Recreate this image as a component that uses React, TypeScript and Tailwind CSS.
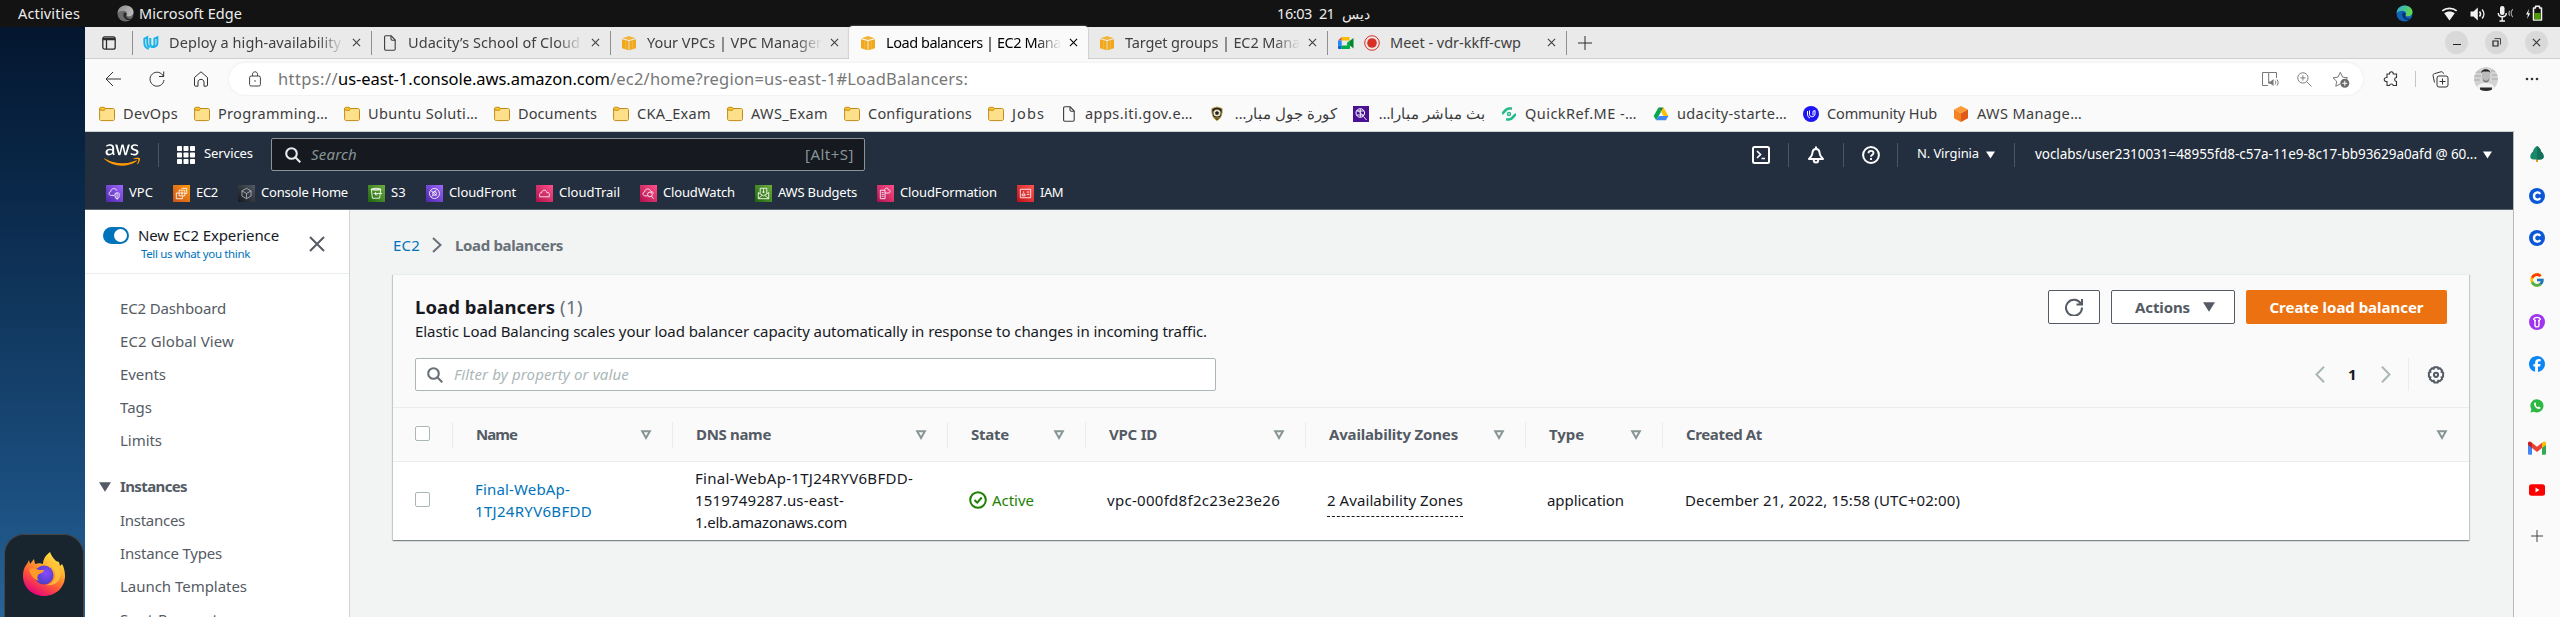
import { useLayoutEffect, useRef, type ReactNode } from "react";
import { FaAws, FaFacebook, FaWhatsapp } from "react-icons/fa6";
import { FcGoogle } from "react-icons/fc";

/* A single line of text whose tracking is set so that it fills the width of its box. */
function T({ children, className = "" }: { children: ReactNode; className?: string }) {
  const box = useRef<HTMLSpanElement>(null);
  const line = useRef<HTMLSpanElement>(null);
  useLayoutEffect(() => {
    const b = box.current;
    const l = line.current;
    if (!b || !l) return;
    l.style.letterSpacing = "0px";
    const n = (l.textContent || "").length;
    const gap = b.getBoundingClientRect().width - l.getBoundingClientRect().width;
    l.style.letterSpacing = `${gap / n}px`;
  }, []);
  return (
    <span ref={box} className={`block shrink-0 whitespace-pre ${className}`}>
      <span ref={line}>{children}</span>
    </span>
  );
}

const Cross = ({ className = "" }: { className?: string }) => (
  <svg viewBox="0 0 10 10" className={`shrink-0 ${className}`} fill="none" stroke="currentColor" strokeWidth="1.200">
    <path d="M1 1l8 8M9 1l-8 8" />
  </svg>
);

const AwsCube = () => (
  <svg viewBox="0 0 16 16" className="size-4 shrink-0">
    <path d="M1 4.200L7.600 6v9.200L1 13.200z" fill="#f0a91f" />
    <path d="M15 4.200L8.400 6v9.200L15 13.200z" fill="#f0a91f" />
    <path d="M1.400 3.200L8 1l6.600 2.200L8 5z" fill="#f5b335" />
    <path d="M4.600 5v9.400M11.400 5v9.400" stroke="#f7bd4c" strokeWidth=".6" />
  </svg>
);

const PageIcon = ({ className = "size-4" }: { className?: string }) => (
  <svg viewBox="0 0 16 16" className={`shrink-0 ${className}`} fill="none" stroke="#3c3c3c" strokeWidth="1.100">
    <path d="M3.800.8h5.400L13.200 5v9c0 .8-.4 1.200-1.200 1.200H3.800c-.8 0-1.200-.4-1.200-1.200V2c0-.8.4-1.200 1.200-1.200z" />
    <path d="M9 .9V4c0 .8.4 1.200 1.200 1.200h3" />
  </svg>
);

const Folder = () => (
  <svg viewBox="0 0 16 16" className="size-4 shrink-0">
    <path d="M.6 2.500h13.200c1.200 0 1.700.6 1.700 1.700v8.600c0 1.200-.6 1.800-1.800 1.800H2.400c-1.200 0-1.800-.6-1.800-1.800z" fill="#ffe08a" stroke="#c08a18" />
    <path d="M.6 3.800V2.800c0-1 .5-1.500 1.500-1.500h2.700c1.200 0 2 1.400 1.200 2.300-.5.600-1.100.8-1.900.8z" fill="#ffc52f" stroke="#c08a18" />
  </svg>
);

function Edge({ gray = false, id }: { gray?: boolean; id: string }) {
  return (
    <svg viewBox="0 0 18 18" className="size-[17px] shrink-0">
      <defs>
        <linearGradient id={id} x1="0" y1="0" x2="1" y2=".4">
          <stop offset="0" stopColor={gray ? "#8b8b8b" : "#2ba9e0"} />
          <stop offset="1" stopColor={gray ? "#b9b9b9" : "#62d64b"} />
        </linearGradient>
      </defs>
      <circle cx="9" cy="9" r="8.500" fill={gray ? "#6c6c6c" : "#1062b8"} />
      <path d="M.6 8.500C1.200 3.500 4.800.5 9.200.5c4.900 0 8.300 3.300 8.300 7 0 2.700-2.100 4.500-4.700 4.500-1.700 0-2.700-.6-2.400-1.300.9-1.400 0-4.600-3.600-4.600-2.700 0-5 1-6.200 2.400z" fill={`url(#${id})`} />
      <path d="M7.300 8.200c-1.700 3.200.5 7.200 4.500 7.700 1.800.1 3.200-.6 4.200-1.700-2.300 1-4.800.3-6-1.500-.7-1-.6-2 .2-3.200-.4-1.500-2.100-2-2.900-1.300z" fill={gray ? "#2a2a2a" : "#0b2f63"} />
    </svg>
  );
}

function TopBar() {
  return (
    <header className="flex h-[27px] shrink-0 items-center bg-[#131313] pl-[18px] pr-[17px] text-[14.500px] leading-[27px] text-[#ededed]">
      <T className="w-[62px]">Activities</T>
      <div className="ml-[37px] flex w-[1160px] items-center gap-[5px]">
        <Edge gray id="edge-gray" />
        <T className="w-[103px]">Microsoft Edge</T>
      </div>
      <div className="flex w-[93px] shrink-0 items-center justify-between">
        <T className="w-[35px]">16:03</T>
        <T className="w-[15px]">21</T>
        <span className="w-[29px] text-right text-[14px]">ديس</span>
      </div>
      <div className="flex flex-1 items-center justify-end">
        <Edge id="edge-color" />
        <svg viewBox="0 0 17 14" className="ml-[28px] h-[14px] w-[17px]" fill="#f2f2f2">
          <path d="M8.500 13.500L3.200 6.200C6 4 11 4 13.800 6.200z" />
          <path d="M1.300 3.900c4-3.500 10.400-3.500 14.400 0" fill="none" stroke="#f2f2f2" strokeWidth="1.800" />
        </svg>
        <svg viewBox="0 0 16 16" className="ml-3 size-4" fill="none" stroke="#f2f2f2">
          <path d="M.5 5.500h3L7.800 1.500v13L3.500 10.500h-3z" fill="#f2f2f2" stroke="none" />
          <path d="M9.500 5.500c1.200 1.400 1.200 3.600 0 5" strokeWidth="1.500" />
          <path d="M12 3.500c2.600 2.600 2.600 6.400 0 9" strokeWidth="1.300" />
        </svg>
        <svg viewBox="0 0 17 17" className="ml-[11px] size-[17px]" fill="none" stroke="#f2f2f2">
          <rect x="3" y="1" width="4.500" height="9" rx="2.200" fill="#f2f2f2" stroke="none" />
          <path d="M1.300 8c0 5 8 5 8 0M5.200 12v4M2.500 16h5.500" strokeWidth="1.400" />
          <path d="M12.800 5.800c-1.200 1.500-1.200 3.500 0 5M15.800 4.200c-2 2.400-2 5.600 0 8" strokeWidth="1.100" stroke="#a5a5a5" />
        </svg>
        <svg viewBox="0 0 18 17" className="ml-[11px] h-[17px] w-[18px]">
          <path d="M4 4L1 9.500h2L2 14l3.300-5.800H3.300z" fill="#f2f2f2" />
          <path d="M8.500 3h2V1.300h4V3h2v12h-8z" fill="none" stroke="#f2f2f2" strokeWidth="1.500" strokeLinejoin="round" />
          <path d="M9.500 8h6v6.500h-6z" fill="#4e9a06" />
        </svg>
      </div>
    </header>
  );
}

function Dock() {
  return (
    <aside className="flex w-[85px] shrink-0 flex-col justify-end bg-linear-to-b from-[#04162f] from-0% via-[#1b4f80] via-80% to-[#276498]">
      <div className="ml-1 flex h-[83px] w-20 justify-center rounded-t-[20px] border border-b-0 border-[#454545] bg-[#18242e] pt-4">
        <svg viewBox="0 0 44 46" className="h-[46px] w-[44px]">
          <defs>
            <linearGradient id="fox" x1=".85" y1="0" x2=".3" y2="1">
              <stop offset="0" stopColor="#fff44f" />
              <stop offset=".35" stopColor="#ffb02e" />
              <stop offset=".65" stopColor="#ff5a36" />
              <stop offset="1" stopColor="#e5007e" />
            </linearGradient>
            <radialGradient id="globe" cx=".6" cy=".4" r=".6">
              <stop offset="0" stopColor="#8a4bff" />
              <stop offset="1" stopColor="#4b3fc4" />
            </radialGradient>
          </defs>
          <path d="M28 1c1 3 3 6 6 9l3 1 1 4 2-2c2 3 3 8 3 12 0 11-9 20-21 20S1 36 1 25c0-6 2-10 4-12l2-4 1 4 4-5 1 5c3-1 6-1 8 0 0-5 3-9 7-12z" fill="url(#fox)" />
          <circle cx="22" cy="24" r="9.500" fill="url(#globe)" />
          <path d="M7 18c4-2 8 0 10 1h5c0 3-4 3-6 5-1 2-1 4 1 6-6-2-9-7-10-12z" fill="#ff9a2a" />
          <path d="M23 13c5 0 10 4 10 11 0 5-4 9-9 10 12 2 16-8 14-15-3-5-8-8-15-6z" fill="#ffc73a" opacity=".8" />
        </svg>
      </div>
    </aside>
  );
}

function Tab({ icon, children, text, active = false, sep = true, fade = true }: { icon: ReactNode; children: string; text: string; active?: boolean; sep?: boolean; fade?: boolean }) {
  return (
    <div className={`relative flex h-[33px] w-[239px] shrink-0 items-center ${active ? "z-10 rounded-t-[4px] bg-[#fafafa] text-black shadow-[0_0_2px_#9a9a9a] [clip-path:inset(-2px_-2px_0_-2px)]" : "text-[#3f3f3f]"}`}>
      {sep ? <i className="h-6 w-px bg-[#8f8f8f]" /> : <i className="h-6 w-px" />}
      <span className="ml-[10px] flex items-center gap-[10px]">{icon}</span>
      <div className={`ml-[10px] w-[175px] ${fade ? "[mask-image:linear-gradient(to_right,black_85%,transparent_100%)]" : ""}`}>
        <T className={text}>{children}</T>
      </div>
      <span className="absolute right-[10px]"><Cross className="size-[9px]" /></span>
    </div>
  );
}

function Tabs() {
  return (
    <div className="flex h-8 shrink-0 items-center border-b border-[#cfcfcf] bg-[#eaeaea] pr-3 text-[14.500px]">
      <svg viewBox="0 0 14 14" className="ml-[17px] mr-4 size-[14px]" fill="none" stroke="#2c2c2c" strokeWidth="1.300">
        <rect x=".8" y=".8" width="12.400" height="12.400" rx="2" />
        <path d="M1 3h12" strokeWidth="2.500" />
        <path d="M4.500 3v10" />
      </svg>
      <Tab text="w-[172px]" icon={
        <svg viewBox="0 0 18 16" className="h-4 w-4" fill="none" stroke="#17b2e8" strokeWidth="2.200">
          <path d="M6.500 14.500C3 13.500 1.500 11 1.500 8V3.200L4.800 1.500V8c0 2.500 1 4 3 4.500" />
          <path d="M8.200 2.500v6.300c0 5.500 8 4.500 8-1V1.500L12.800 3v6c0 3-2.500 4-4 3" />
        </svg>
      }>Deploy a high-availability</Tab>
      <Tab text="w-[172px]" icon={<PageIcon />}>Udacity’s School of Cloud</Tab>
      <Tab text="w-[175px]" icon={<AwsCube />}>Your VPCs | VPC Manager</Tab>
      <Tab text="w-[175px]" active sep={false} icon={<AwsCube />}>Load balancers | EC2 Mana</Tab>
      <Tab text="w-[175px]" sep={false} icon={<AwsCube />}>Target groups | EC2 Mana</Tab>
      <Tab text="w-[131px]" fade={false} icon={
        <>
          <svg viewBox="0 0 16 16" className="size-4">
            <path d="M0 5.500L3.700 2v3.500z" fill="#ea4335" />
            <path d="M3.700 2H11.500v3.500H3.700z" fill="#fbbc04" />
            <path d="M0 5.500h3.700v5H0z" fill="#2684fc" />
            <path d="M0 10.500h3.700V14H1.200C.4 14 0 13.600 0 13z" fill="#0066da" />
            <path d="M3.700 10.500H9V8l3 2.500V13c0 .7-.3 1-1 1H3.700z" fill="#00ac47" />
            <path d="M9 8l6.500-5v10.500z" fill="#00832d" />
            <path d="M12 5.500V10.500L9 8z" fill="#00ac47" />
          </svg>
          <svg viewBox="0 0 16 16" className="size-4">
            <circle cx="8" cy="8" r="7.300" fill="none" stroke="#d93025" />
            <circle cx="8" cy="8" r="4.800" fill="#d93025" />
          </svg>
        </>
      }>Meet - vdr-kkff-cwp</Tab>
      <i className="h-6 w-px bg-[#8f8f8f]" />
      <svg viewBox="0 0 14 14" className="ml-[11px] size-[14px]" stroke="#2c2c2c"><path d="M7 0v14M0 7h14" /></svg>
      <div className="ml-auto flex gap-[17px] text-[#333]">
        <span className="grid size-[23px] place-items-center rounded-full bg-[#d9d9d9]"><i className="mt-1 h-px w-2 bg-[#222]" /></span>
        <span className="grid size-[23px] place-items-center rounded-full bg-[#d9d9d9]">
          <svg viewBox="0 0 9 9" className="size-[9px]" fill="none" stroke="#222"><path d="M1 3h5v5H1z" strokeWidth="1.200" /><path d="M2.500.6h6v6" strokeWidth=".8" /></svg>
        </span>
        <span className="grid size-[23px] place-items-center rounded-full bg-[#d9d9d9]"><Cross className="size-[9px]" /></span>
      </div>
    </div>
  );
}

function Toolbar() {
  return (
    <div className="flex h-[37px] shrink-0 items-center bg-[#fafafa] pt-[3px]">
      <svg viewBox="0 0 16 16" className="ml-5 size-4" fill="none" stroke="#333"><path d="M16 8H1M8 1L1 8l7 7" /></svg>
      <svg viewBox="0 0 16 16" className="ml-7 size-4" fill="none" stroke="#333"><path d="M14.500 5.500A7 7 0 1 0 15 9M14.700 .5v5H10" /></svg>
      <svg viewBox="0 0 16 16" className="ml-7 size-4" fill="none" stroke="#333"><path d="M1.500 6.500L8 .8l6.500 5.700V14c0 .8-.4 1.200-1.200 1.200h-2.300V11c0-3.500-6-3.500-6 0v4.200H2.700c-.8 0-1.200-.4-1.200-1.200z" /></svg>
      <div className="ml-5 flex h-8 w-[2134px] items-center rounded-full bg-white pl-5 pr-[13px] text-[16.500px] text-[#777] shadow-[0_0_3px_#00000014]">
        <svg viewBox="0 0 12 16" className="mr-[17px] h-4 w-3" fill="none" stroke="#444"><rect x=".6" y="5" width="10.800" height="10" rx="1.500" /><path d="M3.500 5V3.200c0-3.200 5-3.200 5 0V5" /><circle cx="6" cy="10" r=".8" fill="#444" stroke="none" /></svg>
        <T className="w-[60px]">https://</T>
        <T className="w-[272px] text-black">us-east-1.console.aws.amazon.com</T>
        <T className="w-[358px]">/ec2/home?region=us-east-1#LoadBalancers:</T>
        <svg viewBox="0 0 18 16" className="ml-auto h-4 w-[18px]" fill="none" stroke="#777"><path d="M7 14.500H1.500v-13h6.200v11M7.700 1.500H15.500V7" /><path d="M8 10.500h1.500L12.500 8v7L9.500 12.800H8z" fill="#777" stroke="none" /><path d="M14 9.500c1 1.300 1 2.700 0 4M16 8.500c1.500 2 1.500 4.200 0 6.200" /></svg>
        <svg viewBox="0 0 16 16" className="ml-[18px] size-[15px]" fill="none" stroke="#777"><circle cx="6.300" cy="6.300" r="5.500" /><path d="M10.300 10.300L15.500 15.500M3.500 6.300h5.600M6.300 3.500v5.600" /></svg>
        <svg viewBox="0 0 18 17" className="ml-5 h-[17px] w-[18px]" fill="none" stroke="#777"><path d="M8 13l-4.200 2.300.9-5L1 6.800l5-.7L8.300 1.300l2.300 4.800 5 .7-1.800 1.700" /><circle cx="12.800" cy="12.300" r="4.500" fill="#6a6a6a" stroke="none" /><path d="M12.800 9.800v5M10.300 12.300h5" stroke="#fff" /></svg>
      </div>
      <svg viewBox="0 0 16 17" className="ml-5 h-[17px] w-4" fill="none" stroke="#333" strokeWidth="1.100"><path d="M4 3h2.500c0-3 3.800-3 3.800 0H13.500v3.500c-2.500.3-2.500 3.700 0 4V14.500h-3.200c-.3-2-3.500-2-3.800 0H4v-4C.3 10.500.3 6.500 4 6.500z" /></svg>
      <i className="ml-4 h-4 w-px bg-[#c6c6c6]" />
      <svg viewBox="0 0 17 17" className="ml-4 size-[17px]" fill="none" stroke="#333"><rect x="5" y="5" width="11" height="11" rx="2" /><path d="M10.500 7.500v6M7.500 10.500h6M2.500 11.500L1 4.500c0-1 .3-1.500 1.300-1.800l7-2c1 0 1.700.4 2.200 2" /></svg>
      <svg viewBox="0 0 24 24" className="ml-[25px] size-6">
        <defs><clipPath id="avatar"><circle cx="12" cy="12" r="12" /></clipPath></defs>
        <g clipPath="url(#avatar)">
          <path d="M0 0h24v24H0z" fill="#d2d2d2" />
          <path d="M0 5h8M0 9h7M0 13h6M17 4h7M18 8h6M18 12h6" stroke="#aaa" />
          <path d="M2 24c0-7 5-8 10-8s9 2 9 8z" fill="#f1f1f1" />
          <path d="M8 6c0-5 8-5 8 0v5c0 3-2 5-4 5s-4-2-4-5z" fill="#bbb" />
          <path d="M7.500 6c-.5-5 9-5 8.800 0l-1.300-1.500H9z" fill="#222" />
          <path d="M9 11.500c1 3 5 3 6 0v1.500c-1 3-5 3-6 0z" fill="#777" />
          <path d="M6 20.500h12V24H6z" fill="#2b2b2b" />
        </g>
      </svg>
      <svg viewBox="0 0 14 4" className="ml-[27px] h-1 w-[14px]" fill="#333"><circle cx="2" cy="2" r="1.300" /><circle cx="7" cy="2" r="1.300" /><circle cx="12" cy="2" r="1.300" /></svg>
    </div>
  );
}

const Mark = ({ icon, children, w }: { icon: ReactNode; children: string; w: string }) => (
  <div className="flex shrink-0 items-center gap-2">
    {icon}
    <T className={w}>{children}</T>
  </div>
);

function Bookmarks() {
  const folders: [string, string][] = [
    ["DevOps", "w-[55px]"],
    ["Programming…", "w-[110px]"],
    ["Ubuntu Soluti…", "w-[110px]"],
    ["Documents", "w-[79px]"],
    ["CKA_Exam", "w-[74px]"],
    ["AWS_Exam", "w-[77px]"],
    ["Configurations", "w-[104px]"],
    ["Jobs", "w-[33px]"],
  ];
  return (
    <div className="flex h-[35px] shrink-0 items-center gap-4 bg-[#fafafa] pl-[14px] text-[14.500px] text-[#3d3d3d]">
      {folders.map(([name, w]) => (
        <Mark key={name} w={w} icon={<Folder />}>{name}</Mark>
      ))}
      <Mark w="w-[108px]" icon={<PageIcon />}>apps.iti.gov.e…</Mark>
      <div className="flex shrink-0 items-center gap-2">
        <svg viewBox="0 0 16 16" className="size-4"><path d="M3 2.500L8 1l5 1.500c.5 5-.5 9.500-5 12-4.500-2.500-5.500-7-5-12z" fill="#2a2418" stroke="#b59a4a" /><circle cx="8" cy="7" r="3.600" fill="#e8e2cb" /><path d="M8 5l2 1.500-.8 2.200H6.800L6 6.500z" fill="#222" /><path d="M5 12h6" stroke="#c89d2d" /></svg>
        <span dir="rtl" className="w-[104px] whitespace-nowrap text-right text-[14.500px]">كورة جول مبار...</span>
      </div>
      <div className="flex shrink-0 items-center gap-2">
        <svg viewBox="0 0 16 16" className="size-4" fill="none" stroke="#fff"><path d="M0 0h16v16H0z" fill="#4a1192" stroke="none" /><circle cx="7.300" cy="7" r="4.300" /><path d="M3.500 5h7.500M3.500 9h7.500M7.300 3v8M4.500 4l6 6M10.500 10.500l3 3.500" strokeWidth=".9" /></svg>
        <span dir="rtl" className="w-[108px] whitespace-nowrap text-right text-[14.500px]">بث مباشر مبارا...</span>
      </div>
      <Mark w="w-[112px]" icon={<svg viewBox="0 0 16 16" className="size-4" fill="none" stroke="#25b98b" strokeWidth="2.600"><path d="M1 7.500c2 0 3-5 7-5h3M15 8.500c-2 0-3 5-7 5H5" /><circle cx="8" cy="8" r="1.500" strokeWidth="1.400" /></svg>}>QuickRef.ME -…</Mark>
      <Mark w="w-[110px]" icon={<svg viewBox="0 0 16 16" className="size-4"><path d="M5.500 1.500L8 5.700 3.200 14.300.7 10z" fill="#00a94f" /><path d="M5.500 1.500h5L8 5.700z" fill="#188038" /><path d="M10.500 1.500l4.900 8.500h-4.900L8 5.700z" fill="#ffc107" /><path d="M5.600 10h9.800l-2.500 4.300H3.200z" fill="#4285f4" /></svg>}>udacity-starte…</Mark>
      <Mark w="w-[110px]" icon={<svg viewBox="0 0 16 16" className="size-4" fill="none" stroke="#fff"><circle cx="8" cy="8" r="8" fill="#1c16f5" stroke="none" /><path d="M4.500 5v3c0 2.500 1 3.500 2.500 4M6.500 4.500v4c0 3 5.500 3 5.500-.5V4.500L10 5.300v4" /></svg>}>Community Hub</Mark>
      <Mark w="w-[105px]" icon={<svg viewBox="0 0 16 16" className="size-4"><path d="M8 0l7 3.600L8 7.200 1 3.600z" fill="#ff9b37" /><path d="M1 3.600l7 3.600V16l-7-3.800z" fill="#f58220" /><path d="M15 3.600L8 7.200V16l7-3.800z" fill="#e05a1c" /></svg>}>AWS Manage…</Mark>
    </div>
  );
}

const Caret = ({ className = "" }: { className?: string }) => (
  <svg viewBox="0 0 10 8" className={`shrink-0 ${className}`} fill="currentColor"><path d="M0 0h10L5 8z" /></svg>
);

const Lens = ({ className = "" }: { className?: string }) => (
  <svg viewBox="0 0 16 16" className={`size-4 shrink-0 ${className}`} fill="none" stroke="currentColor" strokeWidth="2.100"><circle cx="6.500" cy="6.500" r="5.300" /><path d="M10.300 10.300l5 5" /></svg>
);

const tiles: { name: string; w: string; bg: string; art: ReactNode }[] = [
  { name: "VPC", w: "w-[24px]", bg: "from-[#4d27aa] to-[#a166ff]", art: <path d="M9 11H5.500C2.500 11 2.500 7.500 5 7c0-4 6-4 6.500-1M9.500 9c2-1 3.500-1 4.500 0 0 3 0 5-2.300 6C9.500 14 9.500 12 9.500 9zM11.700 8.500V15" /> },
  { name: "EC2", w: "w-[22px]", bg: "from-[#c8511b] to-[#ff9900]", art: <path d="M6.500 5.500h6v6h-6zM9 3.500h5.500V9h-2M10 11.500v3H3.500V8.500h3M8.500 7.500h2v2h-2z" /> },
  { name: "Console Home", w: "w-[87px]", bg: "from-[#16191f] to-[#545b64]", art: <path d="M9 3.500l4.800 2.700v5.500L9 14.500l-4.800-2.800V6.200zM4.200 6.200L9 9l4.800-2.800M9 9v5.500" stroke="#aeb4bb" /> },
  { name: "S3", w: "w-[15px]", bg: "from-[#1b660f] to-[#6cae3e]", art: <path d="M3.500 4.500h10M3.500 4.500l1.200 9.500h7.600l1.200-9.500c0-1.300-10-1.300-10 0s10 1.300 10 0M6 9h9M8 7.500v3h2" /> },
  { name: "CloudFront", w: "w-[67px]", bg: "from-[#4d27aa] to-[#a166ff]", art: <><circle cx="9" cy="9" r="5.300" /><path d="M5.500 6.500l2.500 1.500M8 8l3-2.500M8 8l3 3.500M6 12.500L8 10" /><circle cx="9" cy="9" r="2" /></> },
  { name: "CloudTrail", w: "w-[61px]", bg: "from-[#b0084d] to-[#ff4f8b]", art: <path d="M3.500 12.500h11M4 12c-1-3 1-4 2-3.800C6.500 4.500 11 4.500 11.500 8c2-.5 3.500 1.500 2.500 4" /> },
  { name: "CloudWatch", w: "w-[72px]", bg: "from-[#b0084d] to-[#ff4f8b]", art: <><path d="M8 11.500H5C2.500 11 2.500 7.500 5 7.300c0-4 6-4 6.500-.5 1.500 0 2.500.7 2.500 2.200" /><circle cx="10.500" cy="10" r="2.500" /><path d="M12.300 12l2 2.500" /></> },
  { name: "AWS Budgets", w: "w-[79px]", bg: "from-[#1b660f] to-[#6cae3e]", art: <path d="M3.500 8v6.500h11V8L9 11.500zM5.500 9V3.500h7V9M3.500 14.500L7.500 11M14.500 14.500l-4-3.500M9 4.500v4M7.800 7.500h2.400" /> },
  { name: "CloudFormation", w: "w-[97px]", bg: "from-[#b0084d] to-[#ff4f8b]", art: <path d="M3.500 5.500h5v9h-5zM5 8h2M5 10h2M5 12h2M8 5c1-2.500 4-2 4 0 2-.3 3 3.500 0 3.500H8.500" /> },
  { name: "IAM", w: "w-[23px]", bg: "from-[#bd0816] to-[#ff5252]", art: <path d="M3.500 4.500h11v9h-11zM5.500 11.500V9.500h3v2zM7 6.800v1.400M10.500 7.500h2.500M10.500 10h2.500" /> },
];

const Bar = ({ className = "" }: { className?: string }) => <i className={`h-6 w-px shrink-0 bg-[#4b5663] ${className}`} />;

function AwsNav() {
  return (
    <nav className="flex h-[79px] shrink-0 flex-col border-t border-b border-t-[#c9d2d0] border-b-[#5c646e] bg-[#232f3e] text-[13px] text-white">
      <div className="flex h-[45px] shrink-0 items-center">
        <span className="relative ml-[19px] block h-7 w-[36px] text-[36px] leading-none">
          <FaAws className="-mt-1 text-white [clip-path:inset(0_0_42%_0)]" />
          <FaAws className="absolute left-0 top-0 -mt-1 text-[#ff9900] [clip-path:inset(58%_0_0_0)]" />
        </span>
        <Bar className="ml-[18px]" />
        <svg viewBox="0 0 18 18" className="ml-[18px] size-[18px]" fill="#fff">
          {[0, 6.500, 13].map((x) => [0, 6.500, 13].map((y) => <rect key={`${x}-${y}`} x={x} y={y} width="5" height="5" rx=".8" />))}
        </svg>
        <T className="ml-[9px] w-[49px] pb-px">Services</T>
        <div className="ml-[18px] flex h-[33px] w-[594px] items-center rounded-[2px] border border-[#879596] bg-[#16191f] pl-[13px] pr-[10px] text-[15px] text-[#879596]">
          <Lens className="text-[#e8eaea]" />
          <T className="ml-[10px] w-[46px] italic">Search</T>
          <T className="ml-auto w-[49px]">[Alt+S]</T>
        </div>
        <svg viewBox="0 0 18 18" className="ml-auto size-[18px]" fill="none" stroke="#fff" strokeWidth="2"><rect x="1" y="1" width="16" height="16" rx="1.500" /><path d="M5 5l3.500 3.500L5 12M9.500 12.500H13" strokeWidth="1.700" /></svg>
        <Bar className="ml-[18px]" />
        <svg viewBox="0 0 18 18" className="ml-[18px] size-[18px]" fill="none" stroke="#fff" strokeWidth="2"><path d="M9 .500v2.500C6.800 3 5.500 5 5.300 7.500 5 10 3.500 11 2 13h14c-1.500-2-3-3-3.300-5.500C12.500 5 11.200 3 9 3" strokeLinejoin="round" /><path d="M6.800 13.500v.8c0 3 4.400 3 4.400 0v-.8" /></svg>
        <Bar className="ml-[18px]" />
        <svg viewBox="0 0 18 18" className="ml-[18px] size-[18px]" fill="none" stroke="#fff" strokeWidth="2"><circle cx="9" cy="9" r="7.900" /><path d="M6.500 7.300c0-3.300 5-3.100 5-.2 0 1.700-2.500 1.700-2.500 3.700M9 12v2" strokeWidth="1.900" /></svg>
        <Bar className="ml-[17px]" />
        <T className="ml-[19px] w-[62px] pb-px">N. Virginia</T>
        <Caret className="ml-[7px] h-[8px] w-[9px]" />
        <Bar className="ml-[19px]" />
        <T className="ml-[20px] w-[442px] text-[13.500px]">voclabs/user2310031=48955fd8-c57a-11e9-8c17-bb93629a0afd @ 60...</T>
        <Caret className="ml-[6px] mr-[21px] h-[8px] w-[9px]" />
      </div>
      <div className="flex flex-1 items-center gap-[20px] pl-[21px]">
        {tiles.map((t) => (
          <div key={t.name} className="flex items-center gap-[6px]">
            <span className={`block size-[17px] shrink-0 bg-linear-to-tr ${t.bg}`}>
              <svg viewBox="0 0 18 18" className="size-[17px]" fill="none" stroke="#fff" strokeWidth=".9">{t.art}</svg>
            </span>
            <T className={t.w}>{t.name}</T>
          </div>
        ))}
      </div>
    </nav>
  );
}

function SideNav() {
  const link = "h-[33px] leading-[33px]";
  return (
    <aside className="flex w-[265px] shrink-0 flex-col overflow-hidden border-r border-[#cfd4d4] bg-white text-[15px] text-[#545b64]">
      <div className="flex h-16 shrink-0 border-b border-[#eaeded] pl-[18px]">
        <span className="mt-[17px] flex h-[17px] w-[26px] shrink-0 justify-end rounded-full bg-[#0073bb] p-0.5"><i className="size-[13px] rounded-full bg-white" /></span>
        <div className="ml-[9px] mt-[14px] w-[141px]">
          <T className="w-[141px] leading-[23px] text-[#16191f]">New EC2 Experience</T>
          <T className="ml-[3px] w-[109px] text-[11.500px] leading-[14px] text-[#0073bb]">Tell us what you think</T>
        </div>
        <svg viewBox="0 0 16 16" className="ml-[30px] mt-[26px] size-4" fill="none" stroke="#545b64" strokeWidth="2"><path d="M1 1l14 14M15 1L1 15" /></svg>
      </div>
      <div className="pl-[35px] pt-[18px]">
        <T className={`w-[106px] ${link}`}>EC2 Dashboard</T>
        <T className={`w-[114px] ${link}`}>EC2 Global View</T>
        <T className={`w-[46px] ${link}`}>Events</T>
        <T className={`w-[32px] ${link}`}>Tags</T>
        <T className={`w-[42px] ${link}`}>Limits</T>
        <div className="-ml-[21px] mt-[13px] flex items-center gap-[9px]">
          <Caret className="h-[10px] w-[12px]" />
          <T className={`w-[67px] font-bold ${link}`}>Instances</T>
        </div>
        <T className={`mt-px w-[65px] ${link}`}>Instances</T>
        <T className={`w-[102px] ${link}`}>Instance Types</T>
        <T className={`w-[127px] ${link}`}>Launch Templates</T>
        <T className={`w-[106px] ${link}`}>Spot Requests</T>
      </div>
    </aside>
  );
}

const SortMark = () => (
  <svg viewBox="0 0 12 11" className="h-[10px] w-[12px] shrink-0" fill="none" stroke="#879596" strokeWidth="2.200"><path d="M1.800 1.500h8.400L6 8.800z" /></svg>
);

const Check = () => <i className="mb-[2px] block size-[15px] shrink-0 rounded-[2px] border border-[#aab7b8] bg-white" />;

const heads: { name: string; w: string; col: string }[] = [
  { name: "Name", w: "w-[41px]", col: "w-[220px]" },
  { name: "DNS name", w: "w-[75px]", col: "w-[275px]" },
  { name: "State", w: "w-[38px]", col: "w-[138px]" },
  { name: "VPC ID", w: "w-[48px]", col: "w-[220px]" },
  { name: "Availability Zones", w: "w-[129px]", col: "w-[220px]" },
  { name: "Type", w: "w-[35px]", col: "w-[137px]" },
  { name: "Created At", w: "w-[76px]", col: "w-[806px]" },
];

function Main() {
  return (
    <main className="min-w-0 flex-1 bg-[#f2f3f3] pl-[43px] text-[15px] text-[#16191f]">
      <div className="flex h-16 items-center pt-[6px]">
        <T className="w-[27px] text-[#0073bb]">EC2</T>
        <svg viewBox="0 0 10 16" className="ml-[12px] h-4 w-[10px]" fill="none" stroke="#687078" strokeWidth="2"><path d="M1 1l7.500 7L1 15" /></svg>
        <T className="ml-[13px] w-[108px] font-bold text-[#687078]">Load balancers</T>
      </div>
      <section className="h-[266px] w-[2076px] border-t border-[#eaeded] bg-white shadow-[0_1px_1px_0_#001c244d,1px_1px_1px_0_#001c2426,-1px_1px_1px_0_#001c2426]">
        <div className="flex h-[133px] flex-col border-b border-[#eaeded] bg-[#fafafa] pl-[22px] pr-[22px]">
          <div className="flex h-[83px] pt-[15px]">
            <div className="flex-1">
              <div className="mt-[3px] flex h-[28px] items-center text-[18.500px]">
                <T className="w-[140px] font-bold">Load balancers</T>
                <T className="ml-[5px] w-[23px] text-[#687078]">(1)</T>
              </div>
              <T className="w-[792px] leading-[20px]">Elastic Load Balancing scales your load balancer capacity automatically in response to changes in incoming traffic.</T>
            </div>
            <button className="grid h-[34px] w-[52px] place-items-center rounded-[2px] border border-[#545b64] bg-white">
              <svg viewBox="0 0 18 18" className="size-[18px]" fill="none" stroke="#545b64" strokeWidth="2"><path d="M15.800 5.500A8 8 0 1 0 17 9.500M17 1v5.500h-5.500" /></svg>
            </button>
            <button className="ml-[11px] flex h-[34px] w-[124px] items-center rounded-[2px] border border-[#545b64] bg-white pl-[23px] font-bold text-[#545b64]">
              <T className="w-[55px]">Actions</T>
              <Caret className="ml-[13px] h-[10px] w-[12px]" />
            </button>
            <button className="ml-[11px] flex h-[34px] w-[201px] items-center justify-center rounded-[2px] bg-[#ec7211] font-bold text-white">
              <T className="w-[154px]">Create load balancer</T>
            </button>
          </div>
          <div className="flex h-[33px] items-center">
            <div className="flex h-[33px] w-[801px] items-center rounded-[2px] border border-[#aab7b8] bg-white pl-[11px] text-[#aab7b8]">
              <Lens className="text-[#687078]" />
              <T className="ml-[11px] w-[175px] italic">Filter by property or value</T>
            </div>
            <svg viewBox="0 0 10 17" className="ml-auto h-[17px] w-[10px]" fill="none" stroke="#aab7b8" strokeWidth="2"><path d="M9 .8L1.500 8.500 9 16.200" /></svg>
            <T className="ml-[23px] w-[8px] font-bold">1</T>
            <svg viewBox="0 0 10 17" className="ml-[25px] h-[17px] w-[10px]" fill="none" stroke="#aab7b8" strokeWidth="2"><path d="M1 .8l7.500 7.700L1 16.200" /></svg>
            <i className="ml-[17px] h-[33px] w-px bg-[#eaeded]" />
            <svg viewBox="0 0 18 18" className="ml-[18px] mr-[2px] size-[18px]" fill="none" stroke="#545b64" strokeWidth="2">
              <path d="M7.300 1.200h3.400l.6 1.500 1.500-.5 2.300 2.300-.5 1.500 1.500.7v4l-1.500.7.5 1.500-2.300 2.300-1.500-.5-.6 1.700H7.300l-.6-1.700-1.500.5-2.300-2.300.5-1.500-1.500-.7v-4l1.500-.7-.5-1.500 2.300-2.300 1.500.5z" />
              <circle cx="9" cy="8.800" r="2.100" />
            </svg>
          </div>
        </div>
        <div className="flex h-[54px] items-center border-b border-[#eaeded] bg-[#fafafa] pl-[22px] font-bold text-[#545b64]">
          <Check />
          <span className="w-[22px]" />
          {heads.map((h) => (
            <div key={h.name} className={`flex h-[26px] shrink-0 items-center border-l border-[#eaeded] pl-[23px] pr-5 ${h.col}`}>
              <T className={h.w}>{h.name}</T>
              <span className="ml-auto"><SortMark /></span>
            </div>
          ))}
        </div>
        <div className="flex h-[77px] items-center pb-px pl-[22px] leading-[22px]">
          <Check />
          <div className="ml-[45px] w-[220px] shrink-0 text-[#0073bb]">
            <T className="w-[95px]">Final-WebAp-</T>
            <T className="w-[117px]">1TJ24RYV6BFDD</T>
          </div>
          <div className="w-[274px] shrink-0">
            <T className="w-[218px]">Final-WebAp-1TJ24RYV6BFDD-</T>
            <T className="w-[149px]">1519749287.us-east-</T>
            <T className="w-[152px]">1.elb.amazonaws.com</T>
          </div>
          <div className="flex w-[138px] shrink-0 items-center gap-[5px] text-[#1d8102]">
            <svg viewBox="0 0 18 18" className="size-[18px]" fill="none" stroke="currentColor" strokeWidth="2"><circle cx="9" cy="9" r="7.800" /><path d="M5.500 9l2.700 2.600L12.800 6.500" /></svg>
            <T className="w-[42px]">Active</T>
          </div>
          <div className="w-[220px] shrink-0"><T className="w-[173px]">vpc-000fd8f2c23e23e26</T></div>
          <div className="w-[220px] shrink-0 pt-[6px]"><T className="w-[136px] border-b border-dashed border-[#16191f] pb-[5px]">2 Availability Zones</T></div>
          <div className="w-[138px] shrink-0"><T className="w-[77px]">application</T></div>
          <T className="w-[275px]">December 21, 2022, 15:58 (UTC+02:00)</T>
        </div>
      </section>
    </main>
  );
}

const Coin = ({ color, children }: { color: string; children: ReactNode }) => (
  <svg viewBox="0 0 16 16" className="size-4" fill="none" stroke="#fff"><circle cx="8" cy="8" r="8" fill={color} stroke="none" />{children}</svg>
);

function EdgeRail() {
  return (
    <aside className="flex w-[47px] shrink-0 flex-col items-center gap-[26px] border-l border-[#b9bcbf] bg-[#fafafa] pt-[15px]">
      <svg viewBox="0 0 16 16" className="size-4"><path d="M7 12h2v4H7z" fill="#e8961e" /><path d="M8 0c2 1 4 3.500 4 5.500 3 2 4.500 8-1 8H5c-5.500 0-4-6-1-8C4 3.500 6 1 8 0z" fill="#1b8a6b" /><path d="M8 0c2 1 4 3.500 4 5.500 3 2 4.500 8-1 8H8z" fill="#12705c" /></svg>
      <Coin color="#0b57d8"><path d="M11.200 6C9.500 3 5 4.500 5 8s4.500 5 6.200 2" strokeWidth="2.400" /></Coin>
      <Coin color="#0b57d8"><path d="M11.200 6C9.500 3 5 4.500 5 8s4.500 5 6.200 2" strokeWidth="2.400" /></Coin>
      <FcGoogle className="size-4" />
      <Coin color="#a033f0"><path d="M4.500 6c.5-3.500 6.500-3.500 7 0M6 6.500v4.500c0 2.500 4 2.500 4 0V6.500M5 6.500h2M9 6.500h2" strokeWidth="1.400" /></Coin>
      <FaFacebook className="size-4 text-[#0a86f5]" />
      <svg viewBox="0 0 16 16" className="size-4">
        <path d="M8 1.200A6.600 6.600 0 0 0 2.400 11.300L1.500 14.600l3.400-.9A6.600 6.600 0 1 0 8 1.200z" fill="#2db843" />
        <path d="M5.600 4.600c-1.300 1.200-.2 3.700 1.300 5.100s3.500 2 4.400.9c.4-.6.3-1 .1-1.200l-1.500-.8c-.3-.1-.5 0-.9.6-.2.3-1.900-1-2.400-2.300l.5-.7c.1-.4-.4-1.200-.6-1.600-.2-.3-.6-.3-.9 0z" fill="#fff" />
      </svg>
      <svg viewBox="0 0 18 16" className="h-4 w-[18px]"><path d="M0 3v10.500c0 .8.400 1.200 1.200 1.200H4V6z" fill="#4285f4" /><path d="M18 3v10.500c0 .8-.4 1.200-1.200 1.200H14V6z" fill="#34a853" /><path d="M14 2.800l1.500-1c1.200-.8 2.500 0 2.500 1.400V5l-4 3z" fill="#fbbc04" /><path d="M4 2.800l-1.500-1C1.300 1 0 1.800 0 3.200V5l4 3z" fill="#c5221f" /><path d="M4 2.800l5 3.900 5-3.900V8l-5 3.900L4 8z" fill="#ea4335" /></svg>
      <svg viewBox="0 0 16 16" className="size-4"><rect y="2.300" width="16" height="11.400" rx="2.500" fill="#f00" /><path d="M6.500 5.500v5l4-2.500z" fill="#fff" /></svg>
      <svg viewBox="0 0 12 12" className="mt-[6px] size-3" stroke="#444"><path d="M6 0v12M0 6h12" /></svg>
    </aside>
  );
}

export default function App() {
  return (
    <div className="flex h-[617px] w-[2560px] flex-col overflow-hidden font-['Noto_Sans','Open_Sans',sans-serif] [font-stretch:87.5%]">
      <TopBar />
      <div className="flex min-h-0 flex-1">
        <Dock />
        <div className="flex min-w-0 flex-1 flex-col">
          <Tabs />
          <Toolbar />
          <Bookmarks />
          <div className="flex min-h-0 flex-1">
            <div className="flex min-w-0 flex-1 flex-col">
              <AwsNav />
              <div className="flex min-h-0 flex-1">
                <SideNav />
                <Main />
              </div>
            </div>
            <EdgeRail />
          </div>
        </div>
      </div>
    </div>
  );
}
